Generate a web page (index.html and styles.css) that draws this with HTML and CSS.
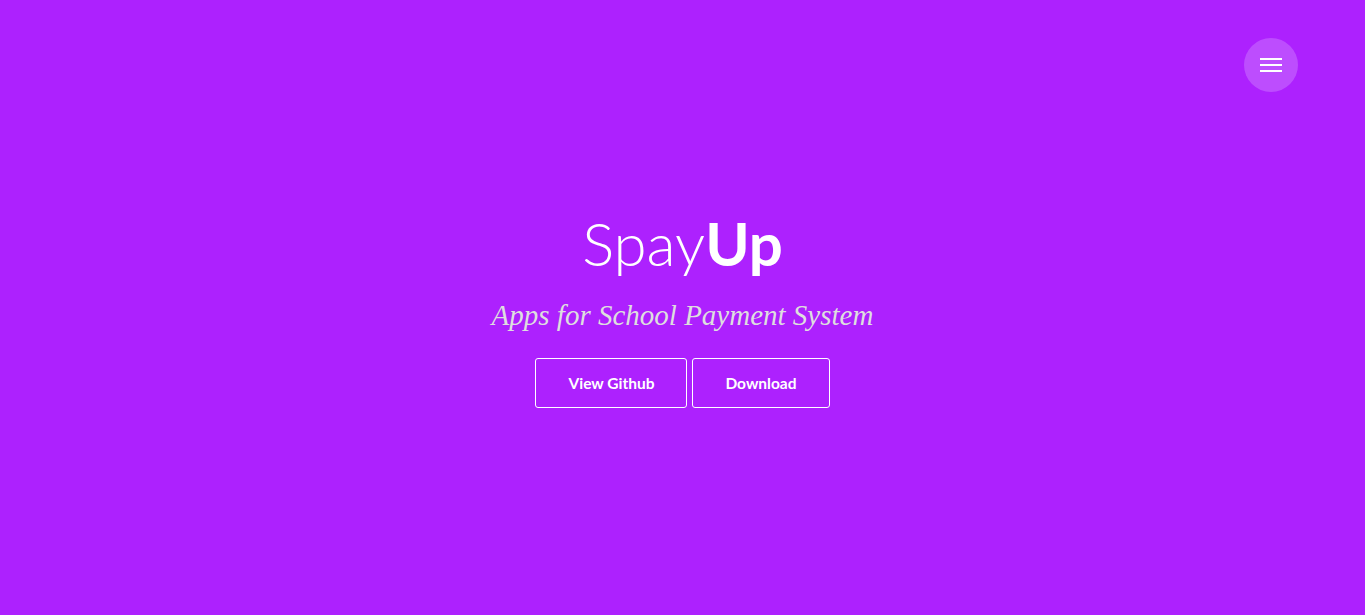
FILE: index.html
```html
<!DOCTYPE html>
<html lang="en">
<head>
<meta charset="utf-8">
<title>SpayUp</title>
<link rel="stylesheet" href="styles.css">
</head>
<body>
<header class="hero">
  <button class="menu-toggle" aria-label="Menu">
    <svg width="22" height="14" viewBox="0 0 22 14" aria-hidden="true">
      <rect x="0" y="0" width="22" height="2" fill="#fff"/>
      <rect x="0" y="6" width="22" height="2" fill="#fff"/>
      <rect x="0" y="12" width="22" height="2" fill="#fff"/>
    </svg>
  </button>
  <div class="hero-content">
    <h1 class="title"><span class="light">Spay</span><span class="bold">Up</span></h1>
    <p class="subtitle">Apps for School Payment System</p>
    <div class="actions">
      <a class="btn" href="#">View Github</a>
      <a class="btn" href="#">Download</a>
    </div>
  </div>
</header>
</body>
</html>
```

FILE: styles.css
```css
html, body {
  margin: 0;
  padding: 0;
}
body {
  background: #ad21fe;
  font-family: Lato, "Open Sans", sans-serif;
  color: #fff;
}
.hero {
  height: 615px;
  display: flex;
  align-items: center;
  justify-content: center;
  position: relative;
}
.menu-toggle {
  position: absolute;
  top: 38px;
  right: 67px;
  width: 54px;
  height: 54px;
  border-radius: 50%;
  border: 0;
  background: rgba(255, 255, 255, 0.2);
  display: flex;
  align-items: center;
  justify-content: center;
  padding: 0;
  cursor: pointer;
}
.menu-toggle svg {
  display: block;
}
.hero-content {
  text-align: center;
  margin-top: 6px;
}
.title {
  margin: 0;
  font-size: 60px;
  line-height: 1;
  font-weight: 300;
  letter-spacing: 0;
}
.title .light {
  font-weight: 300;
}
.title .bold {
  font-weight: 700;
}
.subtitle {
  margin: 25px 0 0;
  font-family: "Liberation Serif", serif;
  font-style: italic;
  font-size: 29px;
  line-height: 1.2;
  color: #dedede;
}
.actions {
  margin-top: 25px;
  display: flex;
  justify-content: center;
  gap: 5px;
}
.btn {
  display: inline-flex;
  align-items: center;
  justify-content: center;
  height: 48px;
  padding: 0 32px;
  border: 1px solid #fff;
  border-radius: 3px;
  color: #fff;
  text-decoration: none;
  font-weight: 700;
  font-size: 15.5px;
}
```
